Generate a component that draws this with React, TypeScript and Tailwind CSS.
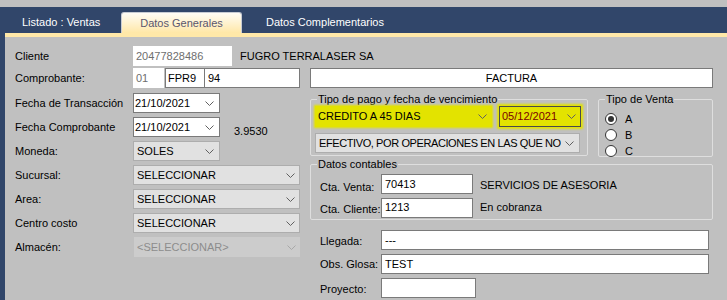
import React from "react";

const Chevron = ({ color = "#606060" }: { color?: string }) => (
  <svg width="9" height="5" viewBox="0 0 9 5" className="shrink-0">
    <path d="M0.5 0.5L4.5 4.5L8.5 0.5" fill="none" stroke={color} strokeWidth="1" />
  </svg>
);

type ComboProps = {
  value: string;
  className: string;
  textClass?: string;
  chevron?: string;
};

// winforms-like combobox / datepicker
const Combo = ({ value, className, textClass = "flex-1 text-black", chevron }: ComboProps) => (
  <div className={`flex items-center h-[20px] ${className}`}>
    <span className={`overflow-hidden whitespace-nowrap ${textClass}`}>{value}</span>
    <Chevron color={chevron} />
  </div>
);

const Radio = ({ label, checked }: { label: string; checked?: boolean }) => (
  <div className="flex items-center h-[16px]">
    <div className="w-[12px] h-[12px] rounded-full border border-[#333] bg-white flex items-center justify-center">
      {checked && <div className="w-[6px] h-[6px] rounded-full bg-[#333]" />}
    </div>
    <span className="ml-[8px]">{label}</span>
  </div>
);

const App = () => {
  return (
    <div
      className="w-[727px] h-[300px] bg-[#c0c0c0] overflow-hidden text-[11px] leading-[13px] text-black"
      style={{ fontFamily: '"Liberation Sans", Arial, sans-serif' }}
    >
      <div className="h-[7px]" />
      <div className="flex h-[293px]">
        <div className="w-[5px] bg-[#31466a]" />
        <div className="flex-1 flex flex-col">
          {/* Tabs */}
          <div className="h-[26px] bg-[#31466a] flex items-end">
            <div className="w-[116px] h-[21px] flex items-center pl-[17px] text-white">
              Listado : Ventas
            </div>
            <div className="w-[121px] h-[21px] flex items-center justify-center rounded-t-[3px] border border-b-0 border-[#c8ccd4] bg-linear-to-b from-[#fffdf6] to-[#ffe7a6] text-[#5a566e]">
              Datos Generales
            </div>
            <div className="h-[21px] flex items-center ml-[24px] text-white">
              Datos Complementarios
            </div>
          </div>
          <div className="h-[4px] bg-[#ffe8a8]" />

          {/* Form */}
          <div className="flex-1 pl-[10px] pt-[9px]">
            <div className="flex items-center h-[20px]">
              <div className="w-[118px]">Cliente</div>
              <div className="w-[99px] h-[20px] bg-white text-[#6e6e6e] pl-[3px] flex items-center">
                20477828486
              </div>
              <div className="ml-[8px]">FUGRO TERRALASER SA</div>
            </div>

            <div className="flex items-center h-[20px] mt-[2px]">
              <div className="w-[118px]">Comprobante:</div>
              <div className="w-[31px] h-[20px] bg-white text-[#6e6e6e] pl-[3px] flex items-center">01</div>
              <div className="w-[40px] h-[20px] ml-[1px] bg-white border border-[#7a7a7a] pl-[2px] flex items-center">
                FPR9
              </div>
              <div className="w-[96px] h-[20px] -ml-[1px] bg-white border border-[#7a7a7a] pl-[3px] flex items-center">
                94
              </div>
              <div className="w-[403px] h-[20px] ml-[10px] bg-white border border-[#7a7a7a] flex items-center justify-center">
                FACTURA
              </div>
            </div>

            <div className="flex items-start mt-[5px]">
              {/* Left column */}
              <div className="w-[285px] flex flex-col gap-[4px]">
                <div className="flex items-center h-[20px]">
                  <div className="w-[118px]">Fecha de Transacción</div>
                  <Combo
                    value="21/10/2021"
                    className="w-[87px] bg-white border border-[#7a7a7a] pl-[1px] pr-[5px]"
                  />
                </div>
                <div className="flex items-center h-[20px]">
                  <div className="w-[118px]">Fecha Comprobante</div>
                  <Combo
                    value="21/10/2021"
                    className="w-[87px] bg-white border border-[#7a7a7a] pl-[1px] pr-[5px]"
                  />
                  <div className="ml-[14px] pt-[8px]">3.9530</div>
                </div>
                <div className="flex items-center h-[20px]">
                  <div className="w-[118px]">Moneda:</div>
                  <Combo
                    value="SOLES"
                    className="w-[87px] bg-[#e1e1e1] border border-[#adadad] pl-[3px] pr-[5px]"
                  />
                </div>
                <div className="flex items-center h-[20px]">
                  <div className="w-[118px]">Sucursal:</div>
                  <Combo
                    value="SELECCIONAR"
                    className="w-[167px] bg-[#e1e1e1] border border-[#adadad] pl-[3px] pr-[4px]"
                  />
                </div>
                <div className="flex items-center h-[20px]">
                  <div className="w-[118px]">Area:</div>
                  <Combo
                    value="SELECCIONAR"
                    className="w-[167px] bg-[#e1e1e1] border border-[#adadad] pl-[3px] pr-[4px]"
                  />
                </div>
                <div className="flex items-center h-[20px]">
                  <div className="w-[118px]">Centro costo</div>
                  <Combo
                    value="SELECCIONAR"
                    className="w-[167px] bg-[#e1e1e1] border border-[#adadad] pl-[3px] pr-[4px]"
                  />
                </div>
                <div className="flex items-center h-[20px]">
                  <div className="w-[119px]">Almacén:</div>
                  <Combo
                    value="<SELECCIONAR>"
                    className="w-[166px] bg-[#cccccc] pl-[3px] pr-[4px]"
                    textClass="flex-1 text-[#8c8c8c]"
                    chevron="#a8a8a8"
                  />
                </div>
              </div>

              {/* Right column */}
              <div className="ml-[10px] w-[403px] flex flex-col">
                <div className="flex items-start">
                  <fieldset className="w-[278px] border border-[#dedede] rounded-[2px] px-[4px] pb-[2px]">
                    <legend className="ml-[2px] px-[1px]">Tipo de pago y fecha de vencimiento</legend>
                    <div className="flex items-center">
                      <Combo
                        value="CREDITO A 45 DIAS"
                        className="w-[177px] !h-[21px] bg-[#e3e300] shadow-[0_0_2px_1px_#e3e300] pl-[3px] pr-[5px]"
                      />
                      <Combo
                        value="05/12/2021"
                        className="w-[82px] !h-[21px] ml-[7px] bg-[#e3e300] border border-[#4a4a4a] shadow-[0_0_2px_2px_#e3e300] pl-[2px] pr-[4px]"
                        textClass="flex-1 text-[#7a0000]"
                      />
                    </div>
                    <Combo
                      value="EFECTIVO, POR OPERACIONES EN LAS QUE NO SE"
                      className="w-[265px] mt-[6px] bg-[#e1e1e1] border border-[#adadad] pl-[3px] pr-[5px] justify-between"
                      textClass="w-[242px] shrink-0 text-black tracking-[-0.4px]"
                    />
                  </fieldset>
                  <fieldset className="w-[115px] h-[64px] ml-[10px] border border-[#dedede] rounded-[2px] pl-[6px] pt-[5px]">
                    <legend className="px-[1px]">Tipo de Venta</legend>
                    <Radio label="A" checked />
                    <Radio label="B" />
                    <Radio label="C" />
                  </fieldset>
                </div>

                <fieldset className="w-[403px] mt-[1px] border border-[#dedede] rounded-[2px] pl-[9px] pt-[3px] pb-[1px]">
                  <legend className="-ml-[3px] px-[1px]">Datos contables</legend>
                  <div className="flex items-start h-[20px]">
                    <div className="w-[61px] pt-[7px]">Cta. Venta:</div>
                    <div className="w-[92px] h-[20px] bg-white border border-[#7a7a7a] pl-[3px] pt-[3px]">70413</div>
                    <div className="ml-[7px] pt-[5px]">SERVICIOS DE ASESORIA</div>
                  </div>
                  <div className="flex items-start h-[20px] mt-[4px]">
                    <div className="w-[61px] pt-[5px]">Cta. Cliente:</div>
                    <div className="w-[92px] h-[20px] bg-white border border-[#7a7a7a] pl-[3px] pt-[2px]">1213</div>
                    <div className="ml-[7px] pt-[3px]">En cobranza</div>
                  </div>
                </fieldset>

                <div className="flex flex-col gap-[4px] mt-[10px] pl-[10px]">
                  <div className="flex items-center h-[20px]">
                    <div className="w-[61px] pt-[3px]">Llegada:</div>
                    <div className="w-[328px] h-[20px] bg-white border border-[#7a7a7a] pl-[3px] flex items-center">
                      ---
                    </div>
                  </div>
                  <div className="flex items-center h-[20px]">
                    <div className="w-[61px] pt-[1px]">Obs. Glosa:</div>
                    <div className="w-[328px] h-[20px] bg-white border border-[#7a7a7a] pl-[3px] flex items-center">
                      TEST
                    </div>
                  </div>
                  <div className="flex items-center h-[20px]">
                    <div className="w-[61px] pt-[3px]">Proyecto:</div>
                    <div className="w-[95px] h-[20px] bg-white border border-[#7a7a7a]" />
                  </div>
                </div>
              </div>
            </div>
          </div>
        </div>
      </div>
    </div>
  );
};

export default App;
